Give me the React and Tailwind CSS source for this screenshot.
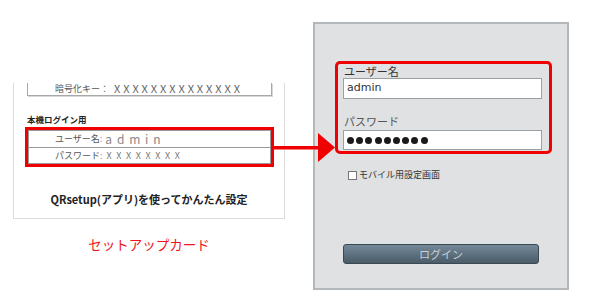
export default function App() {
  const jp = "font-['Noto_Sans_CJK_JP',sans-serif]";

  return (
    <div className={`relative flex w-[600px] h-[294px] bg-white ${jp}`}>
      {/* セットアップカード */}
      <div className="flex flex-col pl-[13px] pt-[83px]">
        <div className="flex flex-col w-[272px] h-[136px] border-x border-b border-[#dcdcdc]">
          <div className="ml-[13px] w-[245px] h-[13px] flex items-end pb-[1px] pl-[27px] border-x border-b border-[#a8a8a8] shadow-[1px_1px_0_#d8d8d8]">
            <span className="text-[9px] leading-[10px] text-[#555]">暗号化キー：</span>
            <span className="ml-[5px] text-[11px] leading-[11px] tracking-[2.9px] text-[#666]">XXXXXXXXXXXXXX</span>
          </div>

          <div className="ml-[13px] mt-[18px] text-[8.5px] leading-[10px] font-bold text-[#222]">本機ログイン用</div>

          <div className="ml-[11px] mt-[3px] w-[249px] border-[3px] border-[#f00000]">
            <div className="border border-[#999] bg-white">
              <div className="flex items-center h-[17px] pl-[26px] border-b border-[#999]">
                <span className="text-[9px] leading-[10px] text-[#555]">ユーザー名</span>
                <span className="text-[9px] leading-[10px] text-[#999]">:</span>
                <span className="ml-[3px] text-[12px] leading-[12px] tracking-[4.8px] text-[#888]">admin</span>
              </div>
              <div className="flex items-center h-[15px] pl-[26px]">
                <span className="text-[9px] leading-[10px] text-[#555]">パスワード</span>
                <span className="text-[9px] leading-[10px] text-[#999]">:</span>
                <span className="ml-[4px] text-[9px] leading-[10px] tracking-[4.6px] text-[#777]">XXXXXXXX</span>
              </div>
            </div>
          </div>

          <div className="mt-[25px] text-center text-[11px] leading-[14px] font-bold text-[#222]">
            QRsetup(アプリ)を使ってかんたん設定
          </div>
        </div>
        <div className="mt-[16px] w-[272px] text-center text-[13.5px] leading-[18px] text-[#f0141e]">
          セットアップカード
        </div>
      </div>

      {/* ログイン画面 */}
      <div className="ml-[28px] mt-[22px] flex flex-col w-[256px] h-[268px] border-2 border-[#b5b8bb] bg-[#dfe1e3]">
        <div className="ml-[20px] mt-[37px] w-[217px] h-[93px] flex flex-col border-[3px] border-[#f00000] rounded-[5px] px-[5px]">
          <div className="pl-[1px] text-[11px] leading-[14px] text-[#333]">ユーザー名</div>
          <div className="w-[199px] h-[21px] flex items-center pl-[3px] bg-white border border-[#9aa0a4] text-[11px] text-[#333] font-['DejaVu_Sans',sans-serif]">
            admin
          </div>
          <div className="mt-[15px] pl-[1px] text-[11px] leading-[14px] text-[#555]">パスワード</div>
          <div className="mt-[2px] w-[199px] h-[20px] flex items-center gap-[2.2px] pl-[3px] bg-white border border-[#9aa0a4]">
            {Array.from({ length: 9 }).map((_, i) => (
              <span key={i} className="w-[7px] h-[7px] rounded-full bg-[#1a1a1a]" />
            ))}
          </div>
        </div>

        <div className="ml-[33px] mt-[15px] flex items-center h-[12px]">
          <span className="w-[9px] h-[9px] border border-[#777] bg-white" />
          <span className="ml-[2px] text-[9px] leading-[12px] text-[#333]">モバイル用設定画面</span>
        </div>

        <button className="ml-[28px] mt-[63px] w-[196px] h-[20px] flex items-center justify-center rounded-[3px] border border-[#3b4852] bg-gradient-to-b from-[#74889a] to-[#4a5c68] text-[11px] leading-[14px] text-[#c8d0d6]">
          ログイン
        </button>
      </div>

      {/* 矢印 */}
      <svg className="absolute left-[273px] top-[132px]" width="63" height="30" viewBox="0 0 63 30">
        <rect x="0" y="14" width="46" height="3.5" fill="#f00000" />
        <polygon points="45,1 62,15.5 45,30" fill="#f00000" />
      </svg>
    </div>
  );
}
